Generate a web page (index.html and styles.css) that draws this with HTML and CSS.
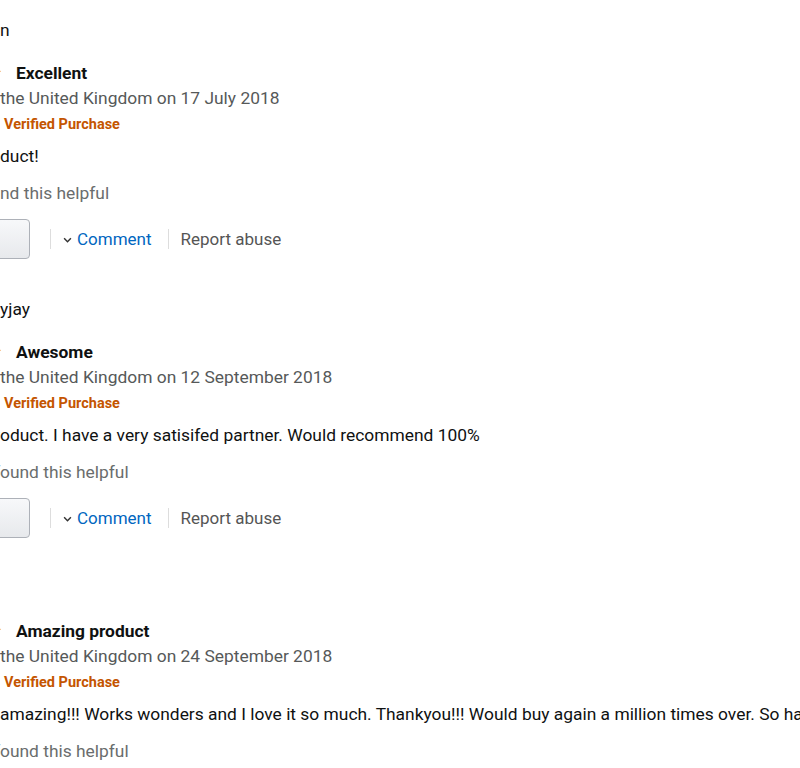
FILE: index.html
```html
<!DOCTYPE html>
<html lang="en">
<head>
<meta charset="utf-8">
<title>Reviews</title>
<link rel="stylesheet" href="styles.css">
</head>
<body>
<svg width="0" height="0" class="defs" aria-hidden="true">
  <defs>
    <symbol id="star" viewBox="0 0 16 16">
      <path d="M8 0.8 L10.1 5.6 L15.4 6.1 L11.4 9.6 L12.6 14.8 L8 12.1 L3.4 14.8 L4.6 9.6 L0.6 6.1 L5.9 5.6 Z" fill="#FFA41C" stroke="#E47911" stroke-width="0.6"/>
    </symbol>
  </defs>
</svg>
<main class="reviews">

  <section class="review">
    <div class="row name-row"><span class="cut"><span class="avatar"></span><span class="hidden-part">Mega</span></span><span class="name">n</span></div>
    <div class="row title-row"><span class="cut cut-star"><span class="stars"><svg><use href="#star"/></svg><svg><use href="#star"/></svg><svg><use href="#star"/></svg><svg><use href="#star"/></svg><svg><use href="#star"/></svg></span></span><span class="title">Excellent</span></div>
    <div class="row date-row"><span class="cut">Reviewed in&nbsp;</span><span>the United Kingdom on 17 July 2018</span></div>
    <div class="row verified-row"><span class="cut">Colour: Black |</span><span class="verified">Verified Purchase</span></div>
    <div class="row body-row"><span class="cut">Great pro</span><span>duct!</span></div>
    <div class="row helpful-row"><span class="cut">One person fou</span><span>nd this helpful</span></div>
    <div class="row actions-row"><span class="helpful-btn">Helpful</span><span class="action comment"><svg class="caret" viewBox="0 0 8 5"><path d="M1 1 L4 4 L7 1" fill="none" stroke="#333" stroke-width="1.3"/></svg>Comment</span><span class="action report">Report abuse</span></div>
  </section>

  <section class="review">
    <div class="row name-row"><span class="cut"><span class="avatar"></span><span class="hidden-part">Ja</span></span><span class="name">yjay</span></div>
    <div class="row title-row"><span class="cut cut-star"><span class="stars"><svg><use href="#star"/></svg><svg><use href="#star"/></svg><svg><use href="#star"/></svg><svg><use href="#star"/></svg><svg><use href="#star"/></svg></span></span><span class="title">Awesome</span></div>
    <div class="row date-row"><span class="cut">Reviewed in&nbsp;</span><span>the United Kingdom on 12 September 2018</span></div>
    <div class="row verified-row"><span class="cut">Colour: Black |</span><span class="verified">Verified Purchase</span></div>
    <div class="row body-row"><span class="cut">Great pr</span><span>oduct. I have a very satisifed partner. Would recommend 100%</span></div>
    <div class="row helpful-row"><span class="cut">2 people f</span><span>ound this helpful</span></div>
    <div class="row actions-row"><span class="helpful-btn">Helpful</span><span class="action comment"><svg class="caret" viewBox="0 0 8 5"><path d="M1 1 L4 4 L7 1" fill="none" stroke="#333" stroke-width="1.3"/></svg>Comment</span><span class="action report">Report abuse</span></div>
  </section>

  <section class="review">
    <div class="row name-row"><span class="cut"><span class="avatar"></span><span class="hidden-part">Kim</span></span><span class="name"></span></div>
    <div class="row title-row"><span class="cut cut-star"><span class="stars"><svg><use href="#star"/></svg><svg><use href="#star"/></svg><svg><use href="#star"/></svg><svg><use href="#star"/></svg><svg><use href="#star"/></svg></span></span><span class="title">Amazing product</span></div>
    <div class="row date-row"><span class="cut">Reviewed in&nbsp;</span><span>the United Kingdom on 24 September 2018</span></div>
    <div class="row verified-row"><span class="cut">Colour: Black |</span><span class="verified">Verified Purchase</span></div>
    <div class="row body-row"><span class="cut">This is </span><span>amazing!!! Works wonders and I love it so much. Thankyou!!! Would buy again a million times over. So happy with it.</span></div>
    <div class="row helpful-row"><span class="cut">3 people f</span><span>ound this helpful</span></div>
    <div class="row actions-row"><span class="helpful-btn">Helpful</span><span class="action comment"><svg class="caret" viewBox="0 0 8 5"><path d="M1 1 L4 4 L7 1" fill="none" stroke="#333" stroke-width="1.3"/></svg>Comment</span><span class="action report">Report abuse</span></div>
  </section>

</main>
</body>
</html>
```

FILE: styles.css
```css
html, body {
  margin: 0;
  padding: 0;
  background: #ffffff;
  overflow: hidden;
}

body {
  font-family: Roboto, "Liberation Sans", Arial, sans-serif;
  font-size: 17.4px;
  color: #0F1111;
}

.defs {
  position: absolute;
  width: 0;
  height: 0;
}

.reviews {
  margin-left: -94px;
  width: 1200px;
}

.review {
  padding-top: 13px;
  padding-bottom: 33px;
  height: 233px;
}

.row {
  display: flex;
  align-items: center;
  white-space: nowrap;
}

.cut {
  flex: 0 0 94px;
  width: 94px;
  display: flex;
  justify-content: flex-end;
  align-items: center;
  white-space: nowrap;
}

.cut-star {
  flex-basis: 99px;
  width: 99px;
}

.name-row {
  height: 34px;
  margin-bottom: 14px;
  color: #0F1111;
}

.avatar {
  width: 34px;
  height: 34px;
  border-radius: 50%;
  background: #d5d9d9;
  margin-right: 10px;
  flex-shrink: 0;
}

.title-row {
  height: 24px;
}

.stars {
  display: flex;
  gap: 2px;
  margin-right: 4px;
}

.stars svg {
  width: 14px;
  height: 14px;
  display: block;
}

.title {
  font-weight: 700;
  margin-left: 11px;
  color: #0F1111;
}

.date-row {
  height: 26px;
  color: #565959;
}

.verified-row {
  height: 24px;
  margin-top: 1px;
  font-size: 14.5px;
  color: #565959;
}

.verified {
  color: #C45500;
  font-weight: 700;
  margin-left: 4px;
}

.body-row {
  height: 26px;
  margin-top: 7px;
}

.helpful-row {
  height: 26px;
  margin-top: 11px;
  color: #6a6d6d;
}

.actions-row {
  height: 40px;
  margin-top: 13px;
  font-size: 17px;
}

.helpful-btn {
  box-sizing: border-box;
  margin-left: -6px;
  width: 130px;
  height: 40px;
  border: 1px solid #adb1b8;
  border-radius: 4px;
  background: linear-gradient(#f7f8fa, #e7e9ec);
  color: #111;
  display: flex;
  align-items: center;
  justify-content: center;
  font-size: 15px;
  margin-right: 20px;
}

.action {
  display: flex;
  align-items: center;
  padding: 0 12px;
  border-left: 1px solid #dddddd;
  height: 20px;
}

.comment {
  color: #0066c0;
  padding-right: 16px;
}

.report {
  color: #555555;
}

.caret {
  width: 9px;
  height: 6px;
  margin-right: 5px;
  margin-top: 2px;
}
```
